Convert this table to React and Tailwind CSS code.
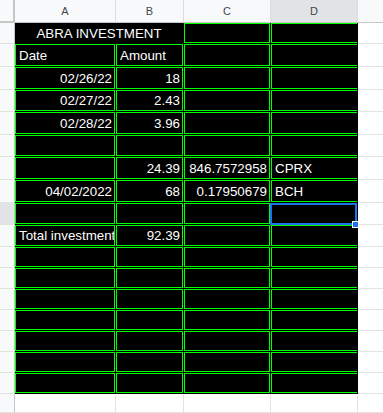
import React from 'react';
import clsx from 'clsx';

const COLS = 'grid grid-cols-[15px_101px_68px_87px_87px_25px]';

// sheet rows, A..D; numbers and dates sit right, text sits left
const ROWS = [
  { h: 'h-[21px]', title: 'ABRA INVESTMENT' },
  { h: 'h-[23px]', cells: ['Date', 'Amount'] },
  { h: 'h-[23px]', cells: ['02/26/22', '18'] },
  { h: 'h-[22px]', cells: ['02/27/22', '2.43'] },
  { h: 'h-[23px]', cells: ['02/28/22', '3.96'] },
  { h: 'h-[22px]', cells: [] },
  { h: 'h-[23px]', cells: ['', '24.39', '846.7572958', 'CPRX'] },
  { h: 'h-[23px]', cells: ['04/02/2022', '68', '0.17950679', 'BCH'] },
  { h: 'h-[22px]', cells: [], active: true },
  { h: 'h-[22px]', cells: ['Total investment', '92.39'] },
  { h: 'h-[21px]', cells: [] },
  { h: 'h-[21px]', cells: [] },
  { h: 'h-[21px]', cells: [] },
  { h: 'h-[21px]', cells: [] },
  { h: 'h-[21px]', cells: [] },
  { h: 'h-[21px]', cells: [] },
  { h: 'h-[21px]', cells: [] },
];

const isNumeric = (v) => /^[\d./]+$/.test(v);

function RowHead({ active }) {
  return (
    <div
      className={clsx(
        'border-r border-b border-r-[#c4c7c5] border-b-[#e1e3e1]',
        active ? 'bg-[#e1e3e6]' : 'bg-[#f8f9fa]'
      )}
    />
  );
}

function Cell({ text = '', last, selected }) {
  const right = isNumeric(text);
  return (
    <div className="relative min-w-0 bg-black border-r border-b border-black">
      <div
        className={clsx(
          'h-full flex items-center overflow-hidden whitespace-nowrap text-white border-[#00ff00]',
          last ? 'border-l border-y' : 'border',
          right ? 'justify-end pr-[2px]' : 'justify-start pl-[3px]'
        )}
      >
        {text}
      </div>
      {selected && (
        <div className="absolute -left-px top-0 right-0 -bottom-px z-10 border-2 border-[#1a73e8]">
          <div className="absolute -right-[4px] -bottom-[5px] w-[7px] h-[7px] bg-[#1a73e8] border border-white" />
        </div>
      )}
    </div>
  );
}

function Spare() {
  return <div className="bg-white border-b border-[#e1e3e1]" />;
}

export default function App() {
  return (
    <div className="w-[383px] h-[413px] overflow-hidden bg-white font-['Liberation_Sans',Arial,sans-serif] text-[13.33px] leading-[15px]">
      {/* column letters */}
      <div className={clsx(COLS, 'h-[23px] text-[11px] text-[#444746]')}>
        <div className="bg-[#f8f9fa] border-r-2 border-b-2 border-[#c4c7c5]" />
        {['A', 'B', 'C', 'D'].map((l) => (
          <div
            key={l}
            className={clsx(
              'flex items-center justify-center border-r border-b border-r-[#dadce0] border-b-[#c4c7c5]',
              l === 'D' ? 'bg-[#e1e3e6]' : 'bg-[#f8f9fa]'
            )}
          >
            {l}
          </div>
        ))}
        <div className="bg-[#f8f9fa] border-b border-[#c4c7c5]" />
      </div>

      {ROWS.map((row, i) => (
        <div key={i} className={clsx(COLS, row.h)}>
          <RowHead active={row.active} />
          {row.title ? (
            <>
              <div className="col-span-2 bg-black border-r border-b border-black flex items-center justify-center text-white whitespace-nowrap">
                {row.title}
              </div>
              <Cell />
              <Cell last />
            </>
          ) : (
            [0, 1, 2, 3].map((c) => (
              <Cell key={c} text={row.cells[c]} last={c === 3} selected={row.active && c === 3} />
            ))
          )}
          <Spare />
        </div>
      ))}

      {/* empty row under the table */}
      <div className={clsx(COLS, 'h-[19px]')}>
        <RowHead />
        {[0, 1, 2, 3].map((c) => (
          <div key={c} className="bg-white border-r border-b border-[#e1e3e1]" />
        ))}
        <Spare />
      </div>
    </div>
  );
}
